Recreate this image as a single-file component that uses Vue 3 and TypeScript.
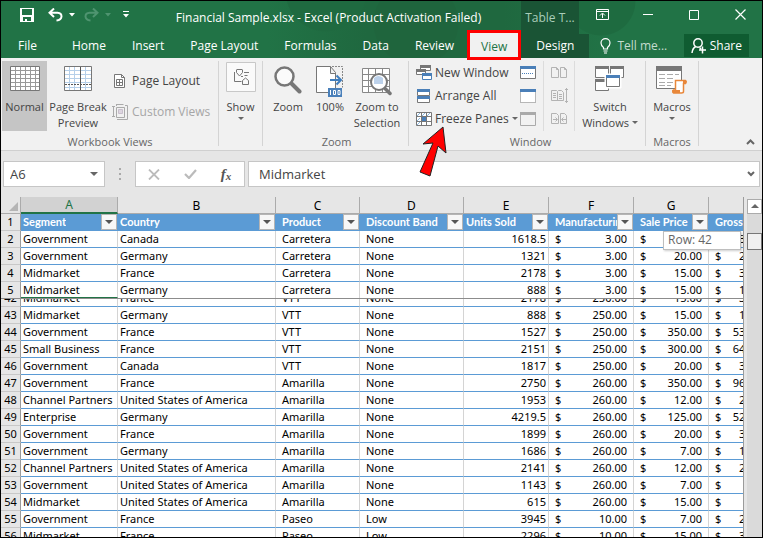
<script setup lang="ts">
import { ref } from 'vue'

interface Row {
  n: number
  segment: string
  country: string
  product: string
  band: string
  units: number
  cost: number
  price: number
}

const tabs = ['Home', 'Insert', 'Page Layout', 'Formulas', 'Data', 'Review', 'View', 'Design']
const active = ref('View')
const nameBox = ref('A6')
const formula = ref('Midmarket')

const columns = [
  { id: 'A', label: 'Segment' },
  { id: 'B', label: 'Country' },
  { id: 'C', label: 'Product' },
  { id: 'D', label: 'Discount Band' },
  { id: 'E', label: 'Units Sold' },
  { id: 'F', label: 'Manufacturing Price' },
  { id: 'G', label: 'Sale Price' },
  { id: 'H', label: 'Gross Sales' },
]

const row = (
  n: number, segment: string, country: string, product: string,
  band: string, units: number, cost: number, price: number,
): Row => ({ n, segment, country, product, band, units, cost, price })

const usa = 'United States of America'

const frozenRows: Row[] = [
  row(2, 'Government', 'Canada', 'Carretera', 'None', 1618.5, 3, 20),
  row(3, 'Government', 'Germany', 'Carretera', 'None', 1321, 3, 20),
  row(4, 'Midmarket', 'France', 'Carretera', 'None', 2178, 3, 15),
  row(5, 'Midmarket', 'Germany', 'Carretera', 'None', 888, 3, 15),
]

const scrollRows: Row[] = [
  row(42, 'Midmarket', 'France', 'VTT', 'None', 2178, 250, 15),
  row(43, 'Midmarket', 'Germany', 'VTT', 'None', 888, 250, 15),
  row(44, 'Government', 'France', 'VTT', 'None', 1527, 250, 350),
  row(45, 'Small Business', 'France', 'VTT', 'None', 2151, 250, 300),
  row(46, 'Government', 'Canada', 'VTT', 'None', 1817, 250, 20),
  row(47, 'Government', 'France', 'Amarilla', 'None', 2750, 260, 350),
  row(48, 'Channel Partners', usa, 'Amarilla', 'None', 1953, 260, 12),
  row(49, 'Enterprise', 'Germany', 'Amarilla', 'None', 4219.5, 260, 125),
  row(50, 'Government', 'France', 'Amarilla', 'None', 1899, 260, 20),
  row(51, 'Government', 'Germany', 'Amarilla', 'None', 1686, 260, 7),
  row(52, 'Channel Partners', usa, 'Amarilla', 'None', 2141, 260, 12),
  row(53, 'Government', usa, 'Amarilla', 'None', 1143, 260, 7),
  row(54, 'Midmarket', usa, 'Amarilla', 'None', 615, 260, 15),
  row(55, 'Government', 'France', 'Paseo', 'Low', 3945, 10, 7),
  row(56, 'Midmarket', 'France', 'Paseo', 'Low', 2296, 10, 15),
]

const money = (v: number): string =>
  v.toLocaleString('en-US', { minimumFractionDigits: 2, maximumFractionDigits: 2 })
</script>

<template>
  <div class="window">
    <header class="top">
      <div class="titlebar">
        <div class="quick">
          <button class="plain save" aria-label="Save">
            <svg width="14" height="14" viewBox="0 0 14 14"><path fill="#fff" fill-rule="evenodd" d="M0 0h14v14H0zM2 1v6h10V1zM3 9v4h2v-2h2v2h4V9z" /></svg>
          </button>
          <button class="plain undo" aria-label="Undo">
            <svg width="15" height="14" viewBox="0 0 15 14" fill="none" stroke="#fff" stroke-width="2"><path d="M6 0.5L1.5 4.8L6 9M2 4.8H9.5Q13.5 5 13.5 8.5Q13.2 12 8.5 12.5" /></svg>
          </button>
          <button class="plain arrow" aria-label="Undo history"><svg width="6" height="4"><path fill="#fff" d="M0 0h6L3 3.5z" /></svg></button>
          <button class="plain redo" aria-label="Redo" disabled>
            <svg width="15" height="14" viewBox="0 0 15 14" fill="none" stroke="#4f9470" stroke-width="2"><path d="M9 0.5L13.5 4.8L9 9M13 4.8H5.5Q1.5 5 1.5 8.5Q1.8 12 6.5 12.5" /></svg>
          </button>
          <button class="plain arrow" aria-label="Redo history" disabled><svg width="6" height="4"><path fill="#4f9470" d="M0 0h6L3 3.5z" /></svg></button>
          <button class="plain custom" aria-label="Customize toolbar"><svg width="6" height="7"><path fill="#fff" d="M0 0h6v1H0zM0 3h6L3 6.5z" /></svg></button>
        </div>
        <h1 class="title">Financial Sample.xlsx - Excel (Product Activation Failed)</h1>
        <div class="context">Table T...</div>
        <div class="controls">
          <button class="plain" aria-label="Ribbon display options">
            <svg width="13" height="11" viewBox="0 0 13 11" fill="none" stroke="#fff"><path d="M.5.5h12v10H.5zM.5 2.5h12M6.5 9V4.5M4 6.5l2.5-2.5L9 6.5" /></svg>
          </button>
          <button class="plain" aria-label="Minimize"><svg width="10" height="11"><path d="M0 5.5h10" stroke="#fff" /></svg></button>
          <button class="plain" aria-label="Maximize"><svg width="10" height="10"><path d="M.5.5h9v9h-9z" fill="none" stroke="#fff" /></svg></button>
          <button class="plain" aria-label="Close"><svg width="11" height="11"><path d="M.5.5l10 10M10.500.5l-10 10" stroke="#fff" stroke-width="1.200" /></svg></button>
        </div>
      </div>
      <nav class="tabs">
        <button class="tab file">File</button>
        <button
          v-for="t in tabs"
          :key="t"
          class="tab"
          :class="{ active: t === active, design: t === 'Design' }"
          @click="active = t"
        >{{ t }}</button>
        <button class="tell">
          <svg width="11" height="16" viewBox="0 0 11 16" fill="none" stroke="#fff" stroke-width="1.200"><path d="M3.500 11V9.500Q1 7.500 1 5a4.500 4.300 0 0 1 9 0Q10 7.500 7.500 9.500V11zM3.500 13h4M4 15h3" /></svg>
          <span>Tell me...</span>
        </button>
        <button class="share">
          <svg width="15" height="16" viewBox="0 0 15 16" fill="none" stroke="#fff" stroke-width="1.500"><circle cx="7" cy="5" r="4.200" /><path d="M1 15q.5-5 4-6.500M8.500 9.500l1.500 1.500M11.500 8.500v7M8 12h7" /></svg>
          <span>Share</span>
        </button>
      </nav>
    </header>

    <section class="ribbon">
      <div class="group views">
        <div class="body">
          <button class="big normal pressed">
            <svg width="30" height="25" viewBox="0 0 30 25"><path fill="#fff" stroke="#777" d="M.5.5h29v24H.5z" /><path stroke="#999" d="M1 4.500h28M1 8.500h28M1 12.500h28M1 16.500h28M1 20.500h28M5.500 1v23M10.500 1v23M15.500 1v23M20.500 1v23M25.500 1v23" /></svg>
            <span>Normal</span>
          </button>
          <button class="big break">
            <svg width="28" height="25" viewBox="0 0 28 25"><path fill="#fff" stroke="#777" d="M.5.5h27v24H.5z" /><path stroke="#b5cfe9" d="M1 4.500h26M1 8.500h26M1 12.500h26M1 16.500h26M1 21.500h26M5.500 1v23M10.500 1v23M21.500 1v23" /><path stroke="#555" d="M16.500 1v23" /><path stroke="#555" stroke-dasharray="2 1" d="M1 18.500h26" /></svg>
            <span>Page Break<br>Preview</span>
          </button>
          <div class="stack">
            <button class="small">
              <svg width="16" height="16" viewBox="0 0 16 16" fill="none" stroke="#777"><path fill="#fff" d="M2.500 1.500h7l3 3v10h-10z" /><path d="M9.500 1.500v3h3M4.500 6.500h6v6h-6zM7.500 6.500v6M4.500 9.500h6" /></svg>
              <span>Page Layout</span>
            </button>
            <button class="small" disabled>
              <svg width="16" height="16" viewBox="0 0 16 16" fill="none" stroke="#aaa"><path d="M4.500 3.500h8v10h-8zM0 2.500h3M1.500 2.500v10M0 12.500h3M4.500 0v2M4.500.5h7M13 1.500h2.500v14H5" /><path fill="#ddd5e0" stroke="#c9bfcc" d="M6.500 5.500h4v4h-4z" /></svg>
              <span>Custom Views</span>
            </button>
          </div>
        </div>
        <h2>Workbook Views</h2>
      </div>

      <div class="group show">
        <div class="body">
          <button class="big">
            <svg width="30" height="30" viewBox="0 0 30 30" fill="none" stroke="#777"><path fill="#fafafa" stroke="#c8c8c8" d="M.5.5h29v29H.5z" /><path d="M11 7.500h5M10.500 7.500v3l3 3.500l3-3.500V7.500M8.500 10v9.500h7M18 10.500h5M18.500 13.500h3M15 14.500h2M16.500 22.500v-4l3-2.500l3 2.500v4z" /></svg>
            <span>Show</span>
            <svg class="drop" width="6" height="4"><path fill="#666" d="M0 0h6L3 3z" /></svg>
          </button>
        </div>
      </div>

      <div class="group zoom">
        <div class="body">
          <button class="big z1">
            <svg width="28" height="28" viewBox="0 0 28 28" fill="none"><path stroke="#777" stroke-width="4" stroke-linecap="round" d="M17 17l8.500 8.500" /><circle cx="10.500" cy="10.500" r="9" fill="#fbfbfb" stroke="#777" stroke-width="2.500" /></svg>
            <span>Zoom</span>
          </button>
          <button class="big z2">
            <svg width="28" height="31" viewBox="0 0 28 31"><path fill="#fff" stroke="#777" d="M12 26.500H.5V.5h14l5 6v16M14.500.5v7h5" /><path fill="none" stroke="#888" stroke-dasharray="2 1" d="M16 .5h10.500v21" /><path fill="none" stroke="#3f7dbd" stroke-width="2" d="M14 14h11M20.500 9.500L25 14l-4.500 4.500" /><path fill="#4a80ba" d="M12 22h14v9H12z" /><path fill="none" stroke="#fff" d="M14.500 24v5M17.500 24.500h2v4h-2zM22 24.500h2v4h-2z" /></svg>
            <span>100%</span>
          </button>
          <button class="big z3">
            <svg width="30" height="30" viewBox="0 0 30 30"><path fill="#fff" stroke="#888" d="M.5 2.500h27v24H.5zM6.500 3v23M20.500 3v23M13.500 3v23M1 8.500h27M1 14.500h27M1 20.500h27" /><path stroke="#777" stroke-width="3.500" stroke-linecap="round" d="M23 22.500l5 5" /><circle cx="17" cy="16" r="8" fill="#fff" stroke="#777" stroke-width="2" /><path fill="#bdd2eb" d="M12 12q4-4 9 0v6h-9z" /></svg>
            <span>Zoom to<br>Selection</span>
          </button>
        </div>
        <h2>Zoom</h2>
      </div>

      <div class="group win">
        <div class="body">
          <div class="trio">
            <button class="small">
              <svg width="16" height="16" viewBox="0 0 16 16"><path fill="#fff" stroke="#777" d="M4.500.5h10v5h-10zM.5 4.500h9v5H.5z" /><path fill="#777" d="M4 0h11v3H4zM0 4h10v3H0z" /><path fill="#fff" stroke="#4a7fb8" d="M6.500 8.500h9v6h-9z" /><path fill="#4a7fb8" d="M6 8h10v3H6z" /></svg>
              <span>New Window</span>
            </button>
            <button class="small">
              <svg width="16" height="16" viewBox="0 0 16 16"><path fill="#fff" stroke="#777" d="M1.500 1.500h12v6h-12zM1.500 8.500h12v6h-12z" /><path fill="#4a7fb8" d="M1 1h13v3H1zM1 8h13v3H1z" /></svg>
              <span>Arrange All</span>
            </button>
            <button class="small freeze">
              <svg width="16" height="16" viewBox="0 0 16 16"><path fill="#fff" stroke="#777" d="M.5 1.500h15v13H.5zM5.500 1v14M10.500 1v14M0 5.500h16M0 10.500h16" /><path fill="none" stroke="#8db8df" d="M1 5l3-3M6 5l3-3M11 5l3-3M1 10l3-3M1 14l3-3" /><path fill="#4a7fb8" d="M6 6h4v4H6z" /></svg>
              <span>Freeze Panes</span>
              <svg class="tick" width="6" height="4"><path fill="#666" d="M0 0h6L3 3z" /></svg>
              <svg class="pointer" width="32" height="54" viewBox="0 0 32 54"><path fill="#f00" stroke="#222" d="M26 2l3 26l-8-7l-8 30l-10-4l13-29l-10 1z" /></svg>
            </button>
          </div>
          <div class="icons">
            <button class="plain" aria-label="Split"><svg width="16" height="14" viewBox="0 0 16 14"><path fill="#fff" stroke="#777" d="M.5.5h15v12H.5z" /><path fill="#4a7fb8" d="M0 0h16v3H0z" /><path stroke="#4a7fb8" stroke-dasharray="1 1" d="M2 7.500h12" /></svg></button>
            <button class="plain" aria-label="Hide"><svg width="16" height="14" viewBox="0 0 16 14"><path fill="#fff" stroke="#777" stroke-dasharray="1 1" d="M.5.5h15v13H.5z" /><path fill="#4a7fb8" d="M0 0h16v3H0z" /></svg></button>
            <button class="plain" aria-label="Unhide" disabled><svg width="16" height="14" viewBox="0 0 16 14"><path fill="#f2f2f2" stroke="#aaa" d="M.5.5h15v13H.5z" /><path fill="#aaa" d="M0 0h16v3H0z" /></svg></button>
          </div>
          <div class="icons lined">
            <button class="plain" aria-label="View side by side" disabled><svg width="17" height="12" viewBox="0 0 17 12"><path fill="none" stroke="#b3b3b3" d="M.5.5h5l2 2v8h-7zM9.500.5h4l2 2v8h-6zM5.500.5v2h2M13.500.5v2h2" /></svg></button>
            <button class="plain" aria-label="Synchronous scrolling" disabled><svg width="17" height="16" viewBox="0 0 17 16"><path fill="none" stroke="#b3b3b3" d="M.5 2.500h5l1 1l1-1h3l2 2v8h-12zM6.500 4v8M2 5.500h3M2 7.500h3M2 9.500h3M8 6.500h3M8 8.500h3M8 10.500h3M15.500 0v15M14 1.500h3M14 13.500h3" /></svg></button>
            <button class="plain" aria-label="Reset window position" disabled><svg width="17" height="12" viewBox="0 0 17 12"><path fill="none" stroke="#b3b3b3" d="M.5.5h5l2 2v8h-7zM9.500.5h4l2 2v8h-6zM2 6.500h4M4.500 4.500l2 2l-2 2M15 6.500h-4M12.500 4.500l-2 2l2 2" /></svg></button>
          </div>
          <button class="big switch">
            <svg width="30" height="26" viewBox="0 0 30 26"><path fill="#fff" stroke="#777" d="M.5.5h13v11H.5zM15.500.5h13v11h-13zM.5 13.500h13v11H.5z" /><path fill="#777" d="M0 0h14v3H0zM15 0h14v3H15zM0 13h14v3H0z" /><path fill="#fff" stroke="#fff" d="M10 8h16v14H10z" /><path fill="#fff" stroke="#777" d="M11.500 9.500h13v11h-13z" /><path fill="#4a7fb8" d="M11 9h14v3H11z" /></svg>
            <span>Switch<br>Windows <svg width="6" height="6"><path fill="#666" d="M0 0h6L3 3z" /></svg></span>
          </button>
        </div>
        <h2>Window</h2>
      </div>

      <div class="group macros">
        <div class="body">
          <button class="big">
            <svg width="31" height="28" viewBox="0 0 31 28"><path fill="#fff" stroke="#777" d="M.5.5h25v22H.5z" /><path fill="#777" d="M0 0h26v5H0z" /><path stroke="#aaa" d="M3 8.500h6M11 8.500h6M19 8.500h4M3 12.500h6M11 12.500h6M3 16.500h6M11 16.500h6M3 19.500h6M11 19.500h4" /><path fill="#fff" stroke="#e8873a" stroke-width="1.500" d="M19.500 14.500h10q1.500 1 0 3h-2v8q0 1.500-2 1.500h-8q-1.500-1 0-3h2z" /><path fill="#e8873a" d="M27 14h3v4h-3zM16 24h8v3h-7z" /></svg>
            <span>Macros</span>
            <svg class="drop" width="6" height="4"><path fill="#666" d="M0 0h6L3 3z" /></svg>
          </button>
        </div>
        <h2>Macros</h2>
      </div>
      <button class="plain collapse" aria-label="Collapse the ribbon"><svg width="9" height="6"><path d="M1 5l3.500-3.500L8 5" fill="none" stroke="#666" stroke-width="2" /></svg></button>
    </section>

    <section class="formula">
      <div class="field namebox">
        <input v-model="nameBox" aria-label="Name box">
        <button class="plain" aria-label="Named ranges"><svg width="8" height="5"><path fill="#666" d="M0 0h8L4 4z" /></svg></button>
      </div>
      <div class="grip"><i></i><i></i><i></i></div>
      <div class="field edit">
        <button class="plain" aria-label="Cancel"><svg width="12" height="11"><path d="M1 .5l10 10M11 .5l-10 10" stroke="#bbb" stroke-width="1.800" /></svg></button>
        <button class="plain" aria-label="Enter"><svg width="13" height="10"><path d="M1 5l4 4L12 1" fill="none" stroke="#bbb" stroke-width="2.200" /></svg></button>
        <button class="plain fx" aria-label="Insert function">f<small>x</small></button>
      </div>
      <div class="field bar">
        <input v-model="formula" aria-label="Formula bar">
        <button class="plain" aria-label="Expand formula bar"><svg width="8" height="6"><path d="M1 1l3 3l3-3" fill="none" stroke="#666" stroke-width="2" /></svg></button>
      </div>
    </section>

    <main class="sheet">
      <div class="panes">
        <div class="pane frozen">
          <table>
            <colgroup><col class="num"><col v-for="c in columns" :key="c.id" :class="'c' + c.id"></colgroup>
            <thead>
              <tr class="letters">
                <th class="corner"><svg width="9" height="9"><path fill="#b5b5b5" d="M9 0v9H0z" /></svg></th>
                <th v-for="c in columns" :key="c.id" :class="{ current: c.id === 'A' }">{{ c.id < 'H' ? c.id : '' }}</th>
              </tr>
              <tr class="labels">
                <th class="n">1</th>
                <th v-for="c in columns" :key="c.id" :class="{ inset: c.id > 'B' && c.id !== 'E' }">
                  <div class="label">
                    <span>{{ c.label }}</span>
                    <button :aria-label="'Filter ' + c.label"><svg width="8" height="5"><path fill="#555" d="M0 0h8L4 4z" /></svg></button>
                  </div>
                </th>
              </tr>
            </thead>
            <tbody>
              <tr v-for="r in frozenRows" :key="r.n">
                <th class="n">{{ r.n }}</th>
                <td>{{ r.segment }}</td>
                <td>{{ r.country }}</td>
                <td class="inset">{{ r.product }}</td>
                <td class="inset">{{ r.band }}</td>
                <td class="right">{{ r.units }}</td>
                <td class="inset"><div class="money"><span>$</span><span>{{ money(r.cost) }}</span></div></td>
                <td class="inset"><div class="money"><span>$</span><span>{{ money(r.price) }}</span></div></td>
                <td class="inset"><div class="money"><span>$</span><span>{{ money(r.units * r.price) }}</span></div></td>
              </tr>
            </tbody>
          </table>
        </div>
        <div class="pane scrolled">
          <table>
            <colgroup><col class="num"><col v-for="c in columns" :key="c.id" :class="'c' + c.id"></colgroup>
            <tbody>
              <tr v-for="r in scrollRows" :key="r.n">
                <th class="n">{{ r.n }}</th>
                <td>{{ r.segment }}</td>
                <td>{{ r.country }}</td>
                <td class="inset">{{ r.product }}</td>
                <td class="inset">{{ r.band }}</td>
                <td class="right">{{ r.units }}</td>
                <td class="inset"><div class="money"><span>$</span><span>{{ money(r.cost) }}</span></div></td>
                <td class="inset"><div class="money"><span>$</span><span>{{ money(r.price) }}</span></div></td>
                <td class="inset"><div class="money"><span>$</span><span>{{ money(r.units * r.price) }}</span></div></td>
              </tr>
            </tbody>
          </table>
        </div>
      </div>
      <div class="scrollbar">
        <button class="up" aria-label="Scroll up"><svg width="8" height="5"><path fill="#666" d="M0 4h8L4 0z" /></svg></button>
        <div class="track">
          <div class="thumb"><div class="tip">Row: 42</div></div>
        </div>
      </div>
    </main>
  </div>
</template>

<style>
body {
  margin: 0;
  overflow: hidden;
}
</style>

<style scoped>
* {
  box-sizing: border-box;
}

.window {
  display: flex;
  flex-direction: column;
  height: 100vh;
  border: 1px solid #000;
  background: #e6e6e6;
  color: #444;
  font: 12px/16px "Open Sans", "Noto Sans", sans-serif;
}

button,
input {
  margin: 0;
  padding: 0;
  border: 0;
  background: none;
  color: inherit;
  font: inherit;
}

svg {
  display: block;
  flex: none;
}

.plain {
  display: flex;
  align-items: center;
  justify-content: center;
}

h1,
h2 {
  margin: 0;
  font: inherit;
}

/* Title bar and tabs */
.top {
  background:
    radial-gradient(circle at 325px -10px, #1f6a40 40px, transparent 41px),
    radial-gradient(circle at 415px 22px, #1f653d 42px, transparent 43px),
    radial-gradient(circle at 600px 0, #1e6b40 34px, transparent 35px),
    linear-gradient(90deg, #217346 0, #217346 35%, #1f683f 48%, #1f683f 66%, #217346 80%);
  color: #fff;
}

.titlebar {
  display: flex;
  height: 33px;
}

.quick {
  display: flex;
  align-items: center;
  width: 135px;
  padding: 0 0 6px 19px;
}

.undo {
  margin-left: 14px;
}

.arrow {
  margin-left: 6px;
}

.redo {
  margin-left: 9px;
}

.custom {
  margin-left: 12px;
}

.title {
  flex: 1;
  overflow: hidden;
  padding-top: 9px;
  text-align: center;
  white-space: nowrap;
}

.context {
  width: 58px;
  padding-top: 9px;
  background: #1a5435;
  color: #a9cdb9;
  text-align: center;
}

.controls {
  display: grid;
  grid-template-columns: repeat(4, 46px);
  width: 183px;
  height: 27px;
}

.tabs {
  display: flex;
  height: 24px;
}

.tab {
  padding: 0 13px;
  white-space: nowrap;
}

.file {
  padding: 0 22px 0 17px;
}

.tab.active {
  margin: -4px 0 -2px;
  padding: 3px 11px 0;
  border: 3px solid #f00;
  background: #f1f1f1;
  color: #217346;
  z-index: 1;
}

.design {
  padding: 0 15px;
  background: #1a5435;
}

.tell {
  display: flex;
  align-items: center;
  gap: 6px;
  padding: 0 11px;
  color: #c4dccf;
  white-space: nowrap;
}

.share {
  display: flex;
  align-items: center;
  gap: 4px;
  height: 23px;
  margin-left: auto;
  margin-right: 13px;
  padding: 0 7px;
  background: #0f5c31;
}

/* Ribbon */
.ribbon {
  position: relative;
  display: flex;
  padding: 3px 0 4px;
  height: 93px;
  border-bottom: 1px solid #d0d0d0;
  background: #f1f1f1;
}

.group {
  display: flex;
  flex-direction: column;
  justify-content: space-between;
  border-right: 1px solid #d4d4d4;
}

.group h2 {
  margin-bottom: -4px;
  color: #666;
  font-size: 11px;
  text-align: center;
}

.body {
  display: flex;
}

.big {
  display: flex;
  flex-direction: column;
  align-items: center;
  height: 70px;
  padding-top: 5px;
  font-size: 11px;
  white-space: nowrap;
}

.big > svg:first-child {
  margin-bottom: auto;
}

.big > span {
  height: 32px;
}

.big span svg {
  display: inline-block;
}

.views {
  width: 218px;
  padding-left: 1px;
}

.normal {
  width: 45px;
}

.pressed {
  background: #c5c5c5;
}

.break {
  width: 62px;
}

.stack {
  display: grid;
  grid-template-rows: 31px 31px;
  padding: 4px 0 0 3px;
}

.small {
  display: flex;
  align-items: center;
  gap: 4px;
  white-space: nowrap;
}

.small:disabled {
  color: #a6a6a6;
}

.show {
  width: 44px;
}

.show .body,
.macros .body {
  justify-content: center;
}

.show .big {
  padding-top: 1px;
}

.drop {
  margin-top: -14px;
  margin-bottom: 10px;
}

.zoom {
  width: 146px;
  padding-left: 2px;
}

.z1 {
  width: 46px;
}

.z2 {
  width: 38px;
}

.z3 {
  width: 56px;
}

.win {
  width: 237px;
  padding-left: 7px;
}

.trio,
.icons {
  display: grid;
  grid-template-rows: repeat(3, 23px);
}

.trio {
  width: 104px;
}

.trio .small {
  gap: 3px;
}

.freeze {
  position: relative;
}

.pointer {
  position: absolute;
  left: 1px;
  top: 18px;
  z-index: 2;
}

.icons {
  width: 23px;
  justify-items: start;
}

.lined {
  width: 32px;
  border: solid #dcdcdc;
  border-width: 0 1px;
  justify-items: center;
}

.switch {
  width: 70px;
}

.macros {
  width: 53px;
}

.collapse {
  position: absolute;
  right: 7px;
  bottom: 5px;
}

/* Formula bar */
.formula {
  display: flex;
  height: 46px;
  padding: 10px 2px;
}

.field {
  display: flex;
  align-items: center;
  border: 1px solid #c6c6c6;
  background: #fff;
}

.field input {
  flex: 1;
  min-width: 0;
  outline: none;
}

.namebox {
  width: 102px;
  padding: 0 6px;
}

.grip {
  display: grid;
  align-content: center;
  justify-content: center;
  gap: 3px;
  width: 30px;
}

.grip i {
  width: 2px;
  height: 2px;
  background: #aaa;
}

.edit {
  width: 110px;
  margin-right: 3px;
  display: grid;
  grid-template-columns: repeat(3, 1fr);
}

.fx {
  color: #555;
  font: italic bold 15px/16px "Liberation Serif", serif;
}

.fx small {
  padding-top: 3px;
  font-size: 11px;
}

.bar {
  flex: 1;
  padding: 0 4px 0 10px;
}

.bar input,
.namebox input {
  font-size: 13px;
}

/* Sheet */
.sheet {
  flex: 1;
  display: flex;
  min-height: 0;
}

.panes {
  flex: 1;
  display: flex;
  flex-direction: column;
  min-width: 0;
  overflow: hidden;
  border-right: 1px solid #9b9b9b;
}

.pane {
  overflow: hidden;
}

.frozen {
  flex: none;
  border-bottom: 1px solid #8c8c8c;
}

.scrolled {
  flex: 1;
  min-height: 0;
  background: #fff;
}

.scrolled table {
  margin-top: -9px;
}

table {
  width: 795px;
  table-layout: fixed;
  border-collapse: separate;
  border-spacing: 0;
  background: #fff;
  color: #000;
  font-family: "Noto Sans", "Open Sans", sans-serif;
}

.num { width: 20px; }
.cA { width: 97px; }
.cB { width: 158px; }
.cC { width: 84px; }
.cD { width: 104px; }
.cE { width: 85px; }
.cF { width: 85px; }
.cG { width: 75px; }
.cH { width: 87px; }

th,
td {
  height: 17px;
  padding: 0 2px;
  overflow: hidden;
  border-right: 1px solid #d4d4d4;
  border-bottom: 1px solid #5b9bd5;
  font-size: 11px;
  font-weight: normal;
  line-height: 16px;
  text-align: left;
  white-space: nowrap;
}

.frozen tbody tr:last-child > * {
  height: 16px;
  border-bottom: 0;
}

.frozen tbody tr:last-child > td:nth-child(2) {
  border-bottom: 1px solid #217346;
  line-height: 15px;
}

.inset {
  padding: 0 6px;
}

.right {
  text-align: right;
}

.money {
  display: flex;
  justify-content: space-between;
}

th.n {
  padding: 0;
  border-right-color: #9b9b9b;
  border-bottom-color: #c8c8c8;
  background: #e6e6e6;
  text-align: center;
}

.letters th {
  height: 16px;
  padding: 0;
  border-right-color: #ababab;
  border-bottom-color: #ababab;
  background: #e6e6e6;
  font-size: 12px;
  line-height: 15px;
  text-align: center;
}

.letters .current {
  border-bottom: 2px solid #217346;
  background: #d2d2d2;
  color: #217346;
}

.letters .corner {
  padding: 0 2px 2px 8px;
  vertical-align: bottom;
}

.labels th:not(.n) {
  padding-right: 0;
  border-right-color: #5b9bd5;
  background: #5b9bd5;
  color: #fff;
  font-family: Lato, "Noto Sans", sans-serif;
  font-size: 11px;
  font-weight: bold;
}

.label {
  display: flex;
  justify-content: space-between;
}

.label span {
  min-width: 0;
  overflow: hidden;
}

.label button {
  display: flex;
  flex: none;
  align-items: center;
  justify-content: center;
  width: 16px;
  height: 16px;
  border: 1px solid #b5b5b5;
  background: #f7f7f7;
}

.scrollbar {
  display: flex;
  flex-direction: column;
  width: 18px;
  padding: 2px 0 0 3px;
}

.up {
  display: flex;
  align-items: center;
  justify-content: center;
  height: 15px;
  border: 1px solid #ababab;
  background: #fff;
}

.track {
  flex: 1;
  padding-top: 19px;
  background: #dadada;
}

.thumb {
  position: relative;
  height: 17px;
  border: 1px solid #777;
  background: #f0f0f0;
}

.tip {
  position: absolute;
  right: 20px;
  top: -3px;
  width: 78px;
  height: 19px;
  padding-left: 4px;
  border: 1px solid #bebebe;
  background: #fff;
  box-shadow: 1px 1px 2px #0003;
  color: #666;
}
</style>
